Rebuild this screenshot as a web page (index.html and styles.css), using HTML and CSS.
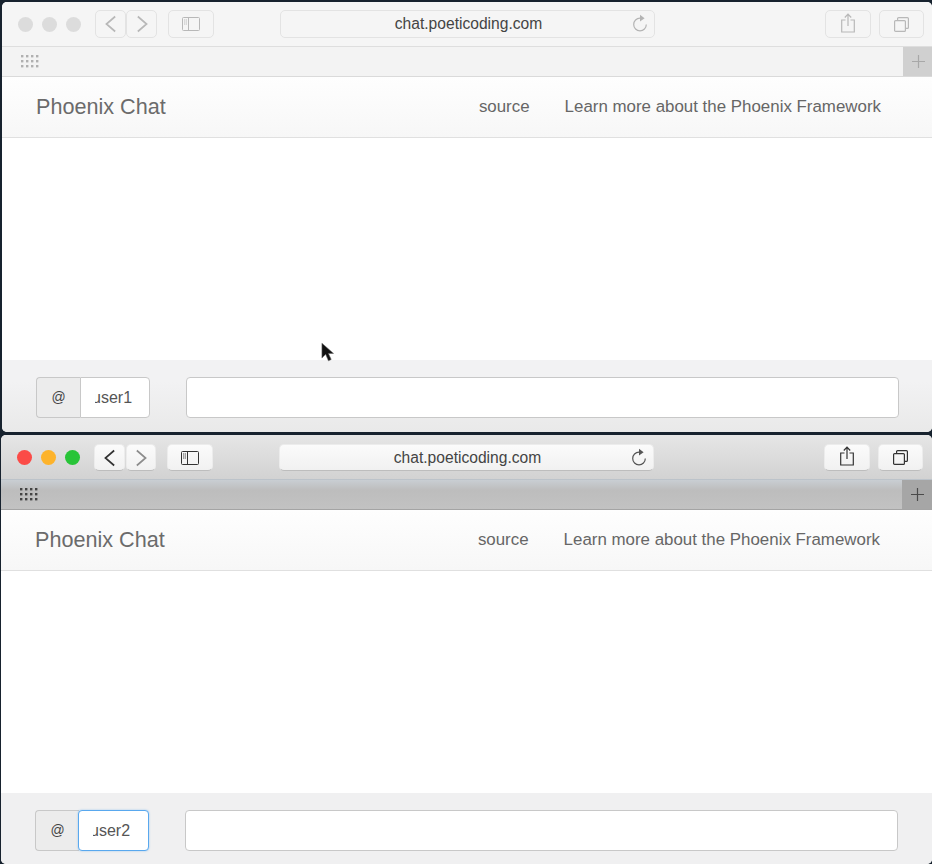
FILE: index.html
```html
<!DOCTYPE html>
<html lang="en">
<head>
<meta charset="utf-8">
<title>Phoenix Chat</title>
<link rel="stylesheet" href="styles.css">
</head>
<body>
<svg class="defs" width="0" height="0" aria-hidden="true">
  <defs>
    <symbol id="i-back" viewBox="0 0 24 24"><path d="M17 3 6.500 12 17 21" fill="none" stroke="currentColor" stroke-width="2"/></symbol>
    <symbol id="i-forward" viewBox="0 0 24 24"><path d="M7 3l10.500 9L7 21" fill="none" stroke="currentColor" stroke-width="2"/></symbol>
    <symbol id="i-sidebar" viewBox="0 0 18 14"><rect x=".5" y=".5" width="17" height="13" rx="1" fill="none" stroke="currentColor"/><path d="M6.500 1v12" stroke="currentColor"/><path d="M2 3h3M2 5h3M2 7h3" stroke="currentColor" stroke-dasharray="1.400 .6" stroke-width=".9"/></symbol>
    <symbol id="i-reload" viewBox="0 0 16 18"><path d="M8 4.200A6.300 6.300 0 1 0 14.300 10.500" fill="none" stroke="currentColor" stroke-width="1.200"/><path d="M8 .8 12.600 4.200 8 7.600z" fill="currentColor"/></symbol>
    <symbol id="i-share" viewBox="0 0 14 20"><path d="M4.500 7H.7v12h12.600V7H9.500" fill="none" stroke="currentColor" stroke-width="1.200"/><path d="M7 13V1.500M3.800 4.500 7 1.200l3.200 3.300" fill="none" stroke="currentColor" stroke-width="1.200"/></symbol>
    <symbol id="i-tabs" viewBox="0 0 15 15"><rect x=".6" y="3.600" width="10.800" height="10.800" rx="1" fill="none" stroke="currentColor" stroke-width="1.200"/><path d="M3.600 3.400V1.600a1 1 0 0 1 1-1h8.800a1 1 0 0 1 1 1v8.800a1 1 0 0 1-1 1h-1.800" fill="none" stroke="currentColor" stroke-width="1.200"/></symbol>
    <symbol id="i-grid" viewBox="0 0 18 14"><g fill="currentColor"><rect x="0" y="0" width="2.400" height="2.400"/><rect x="5" y="0" width="2.400" height="2.400"/><rect x="10" y="0" width="2.400" height="2.400"/><rect x="15" y="0" width="2.400" height="2.400"/><rect x="0" y="5" width="2.400" height="2.400"/><rect x="5" y="5" width="2.400" height="2.400"/><rect x="10" y="5" width="2.400" height="2.400"/><rect x="15" y="5" width="2.400" height="2.400"/><rect x="0" y="10" width="2.400" height="2.400"/><rect x="5" y="10" width="2.400" height="2.400"/><rect x="10" y="10" width="2.400" height="2.400"/><rect x="15" y="10" width="2.400" height="2.400"/></g></symbol>
    <symbol id="i-plus" viewBox="0 0 15 15"><path d="M7.500 1v13M1 7.500h13" stroke="currentColor" stroke-width="1.200"/></symbol>
  </defs>
</svg>
<section class="window window-inactive">
  <header class="toolbar">
    <div class="lights"><i class="light light-close"></i><i class="light light-min"></i><i class="light light-zoom"></i></div>
    <div class="nav-buttons">
      <span class="btn btn-nav"><svg class="ico-chevron ico-back"><use href="#i-back"/></svg></span>
      <span class="btn btn-nav"><svg class="ico-chevron ico-forward"><use href="#i-forward"/></svg></span>
    </div>
    <span class="btn btn-side"><svg class="ico-sidebar"><use href="#i-sidebar"/></svg></span>
    <div class="btn address"><span class="url">chat.poeticoding.com</span><svg class="ico-reload"><use href="#i-reload"/></svg></div>
    <span class="btn btn-share"><svg class="ico-share"><use href="#i-share"/></svg></span>
    <span class="btn btn-tabs"><svg class="ico-tabs"><use href="#i-tabs"/></svg></span>
  </header>
  <div class="favbar"><svg class="ico-grid"><use href="#i-grid"/></svg><span class="add-tab"><svg class="ico-plus"><use href="#i-plus"/></svg></span></div>
  <nav class="site-nav">
    <span class="brand">Phoenix Chat</span>
    <a class="nav-link">source</a>
    <a class="nav-link">Learn more about the Phoenix Framework</a>
  </nav>
  <main class="messages"></main>
  <footer class="composer">
    <div class="user-group">
      <span class="at">@</span>
      <div class="user-field"><span class="user-clip"><span class="user-text">user1</span></span></div>
    </div>
    <div class="msg-field"></div>
  </footer>
</section>
<svg class="cursor" viewBox="0 0 14 22"><path d="M1 1v16l4-4 3 7 3-1.500-3-6.500h5.500z" fill="#111" stroke="#666" stroke-width=".6"/></svg>
<section class="window window-active">
  <header class="toolbar">
    <div class="lights"><i class="light light-close"></i><i class="light light-min"></i><i class="light light-zoom"></i></div>
    <div class="nav-buttons">
      <span class="btn btn-nav"><svg class="ico-chevron ico-back"><use href="#i-back"/></svg></span>
      <span class="btn btn-nav"><svg class="ico-chevron ico-forward"><use href="#i-forward"/></svg></span>
    </div>
    <span class="btn btn-side"><svg class="ico-sidebar"><use href="#i-sidebar"/></svg></span>
    <div class="btn address"><span class="url">chat.poeticoding.com</span><svg class="ico-reload"><use href="#i-reload"/></svg></div>
    <span class="btn btn-share"><svg class="ico-share"><use href="#i-share"/></svg></span>
    <span class="btn btn-tabs"><svg class="ico-tabs"><use href="#i-tabs"/></svg></span>
  </header>
  <div class="favbar"><svg class="ico-grid"><use href="#i-grid"/></svg><span class="add-tab"><svg class="ico-plus"><use href="#i-plus"/></svg></span></div>
  <nav class="site-nav">
    <span class="brand">Phoenix Chat</span>
    <a class="nav-link">source</a>
    <a class="nav-link">Learn more about the Phoenix Framework</a>
  </nav>
  <main class="messages"></main>
  <footer class="composer">
    <div class="user-group">
      <span class="at">@</span>
      <div class="user-field user-field-focus"><span class="user-clip"><span class="user-text">user2</span></span></div>
    </div>
    <div class="msg-field"></div>
  </footer>
</section>
</body>
</html>
```
FILE: styles.css
```css
html, body { margin: 0; padding: 0; }
body {
  position: relative;
  width: 932px;
  height: 864px;
  overflow: hidden;
  background: #17222e;
  font-family: "Liberation Sans", Arial, sans-serif;
  display: flex;
  flex-direction: column;
}
.defs { position: absolute; }

.window {
  display: flex;
  flex-direction: column;
  flex: none;
  background: #fff;
  overflow: hidden;
  border-radius: 5px;
  width: 930px;
}
.window-inactive { height: 430px; margin: 2px 0 0 2px; }
.window-active { width: 931px; height: 429px; margin: 3px 0 0 1px; }

/* toolbar */
.toolbar {
  height: 45px;
  flex: none;
  box-sizing: border-box;
  display: flex;
  align-items: flex-start;
  padding-top: 8px;
  background: #f5f5f5;
  border-bottom: 1px solid #dedede;
}
.window-active .toolbar {
  padding-top: 9px;
  background: linear-gradient(#e6e6e6, #d2d2d2);
  border-bottom-color: #bcc3ca;
}
.lights { display: flex; gap: 9px; margin: 7px 0 0 15.500px; }
.window-active .lights { margin-top: 6px; }
.light { width: 15px; height: 15px; border-radius: 50%; background: #dcdcdc; }
.window-active .light-close { background: #fb4b47; }
.window-active .light-min { background: #fdb32b; }
.window-active .light-zoom { background: #28c438; }

.btn {
  box-sizing: border-box;
  height: 28px;
  display: flex;
  align-items: center;
  justify-content: center;
  border: 1px solid #e3e3e3;
  border-radius: 5px;
  background: #f5f5f5;
  color: #b8b8b8;
}
.window-active .btn {
  height: 27px;
  background: linear-gradient(#fbfbfb, #f1f1f1);
  border-color: #ececec;
  border-bottom-color: #bdbdbd;
  color: #333;
}
.nav-buttons { display: flex; margin-left: 14.500px; }
.btn-nav { width: 31px; }
.window-active .btn-nav + .btn-nav { width: 30px; margin-left: 1px; }
.btn-side { width: 46px; margin-left: 11px; }
.address {
  position: relative;
  width: 375px;
  margin-left: 66px;
  padding-left: 2px;
}
.url { font-size: 15.600px; color: #444; }
.ico-reload {
  position: absolute;
  right: 6px;
  top: 3px;
  width: 16px;
  height: 18px;
  color: #b4b4b4;
}
.window-active .ico-reload { color: #555; }
.btn-share { width: 46px; margin-left: 170px; }
.btn-tabs { width: 45px; margin-left: 8px; }

.ico-chevron { width: 20px; height: 20px; }
.window-active .ico-forward { color: #8c8c8c; }
.ico-sidebar { width: 18px; height: 14px; }
.ico-share { width: 14px; height: 20px; margin-top: -3px; }
.ico-tabs { width: 15px; height: 15px; }

/* favourites bar */
.favbar {
  height: 30px;
  flex: none;
  box-sizing: border-box;
  display: flex;
  align-items: center;
  padding-left: 18.500px;
  background: #f3f3f3;
  border-bottom: 1px solid #dadada;
  color: #b0b0b0;
  position: relative;
}
.window-active .favbar {
  background: linear-gradient(#c9ced3, #bdbdbd 35%, #c2c2c2);
  border-bottom-color: #a4a4a4;
  color: #444;
}
.ico-grid { width: 18px; height: 14px; }
.add-tab {
  position: absolute;
  left: 901px;
  top: 0;
  width: 30px;
  height: 29px;
  display: flex;
  align-items: center;
  justify-content: center;
  background: #d0d0d0;
  color: #a8a8a8;
}
.window-active .add-tab { background: #a6a6a6; color: #4a4a4a; }
.ico-plus { width: 15px; height: 15px; }

/* site nav */
.site-nav {
  height: 61px;
  flex: none;
  box-sizing: border-box;
  display: flex;
  align-items: center;
  padding: 0 51px 0 34px;
  background: linear-gradient(#fefefe, #f7f7f7);
  border-bottom: 1px solid #e0e0e0;
  box-shadow: 0 3px 6px rgba(0, 0, 0, .03);
  color: #6a6a6a;
}
.window-active .site-nav { padding-right: 52px; }
.brand { font-size: 21.600px; color: #6b6b6b; margin-right: auto; }
.nav-link { font-size: 16.900px; color: #666; margin-left: 35px; }

.messages { flex: 1; background: #fff; }

/* composer */
.composer {
  height: 72px;
  flex: none;
  box-sizing: border-box;
  display: flex;
  align-items: flex-start;
  padding: 17px 0 0 34px;
  background: #f0f0f1;
}
.window-active .composer { height: 71px; }
.window-inactive .composer { background: linear-gradient(#f2f2f3 30%, #e9e9e9); }
.user-group { display: flex; width: 114px; height: 41px; }
.at {
  box-sizing: border-box;
  width: 44px;
  padding-bottom: 1px;
  display: flex;
  align-items: center;
  justify-content: center;
  background: #ececec;
  border: 1px solid #c8c8c8;
  border-right: 0;
  border-radius: 4px 0 0 4px;
  font-size: 14px;
  color: #444;
}
.user-field {
  box-sizing: border-box;
  width: 70px;
  display: flex;
  align-items: center;
  padding-left: 14px;
  background: #fff;
  border: 1px solid #c8c8c8;
  border-radius: 0 4px 4px 0;
  font-size: 16px;
  color: #555;
}
.user-field-focus {
  width: 71px;
  margin-left: -1px;
  padding-left: 14px;
  border-color: #59a8ee;
  border-radius: 4px;
  box-shadow: 0 0 2px rgba(89, 168, 238, .6);
}
.user-clip { overflow: hidden; width: 38px; }
.user-text { display: block; margin-left: -3px; }
.msg-field {
  box-sizing: border-box;
  width: 713px;
  height: 41px;
  margin-left: 36px;
  background: #fff;
  border: 1px solid #c8c8c8;
  border-radius: 4px;
}

/* mouse pointer floating over the first window */
.cursor {
  position: absolute;
  left: 321px;
  top: 342px;
  width: 13px;
  height: 21px;
}
```
